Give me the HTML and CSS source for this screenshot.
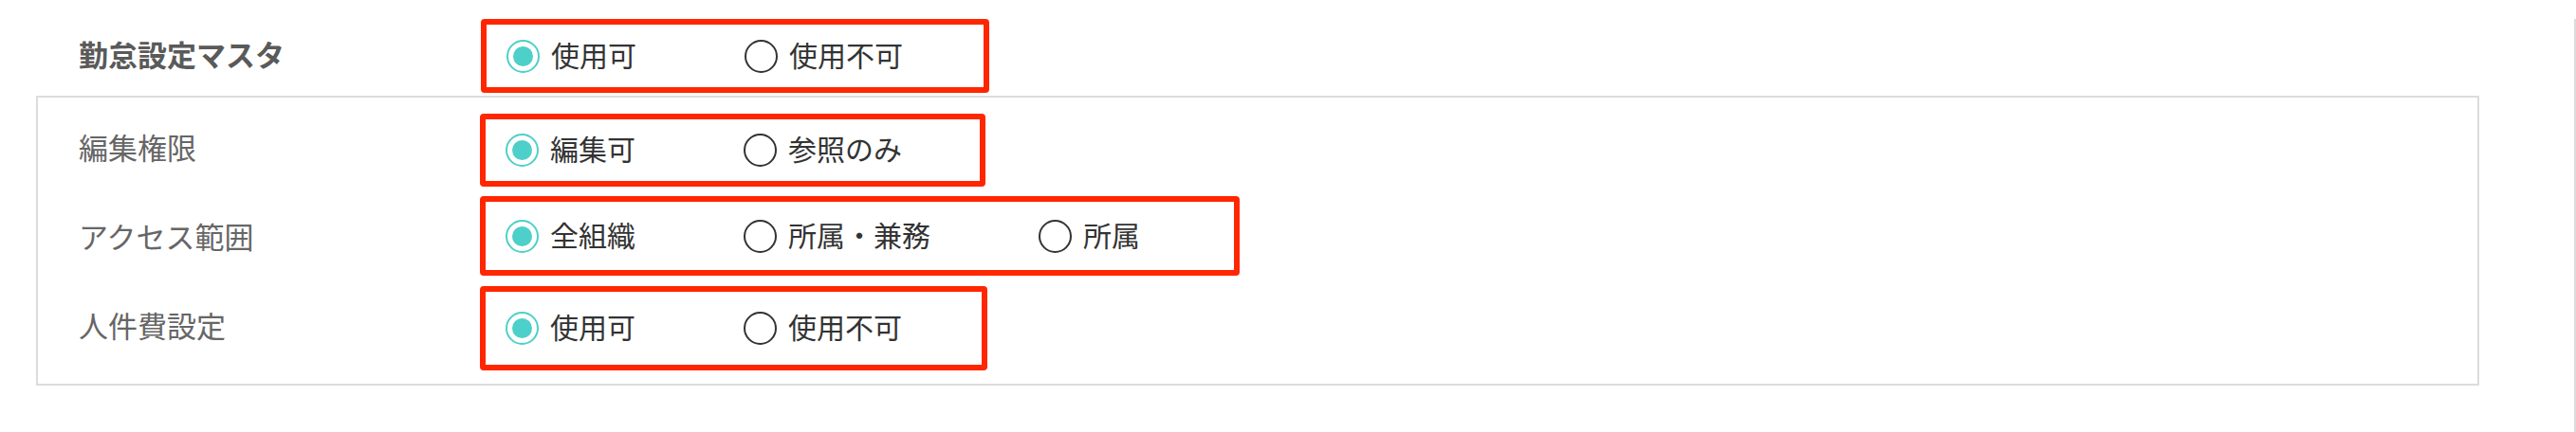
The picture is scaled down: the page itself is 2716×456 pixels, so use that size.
FILE: index.html
```html
<!DOCTYPE html>
<html lang="ja">
<head>
<meta charset="utf-8">
<title>勤怠設定マスタ</title>
<link rel="stylesheet" href="styles.css">
</head>
<body>
<div class="page">
  <div class="title-row">
    <div class="title">勤怠設定マスタ</div>
    <div class="opts opts-r1">
      <label class="opt"><span class="radio checked"></span><span class="opt-text">使用可</span></label>
      <label class="opt"><span class="radio"></span><span class="opt-text">使用不可</span></label>
    </div>
  </div>
  <div class="panel">
    <div class="row">
      <div class="label">編集権限</div>
      <div class="opts opts-r2">
        <label class="opt"><span class="radio checked"></span><span class="opt-text">編集可</span></label>
        <label class="opt"><span class="radio"></span><span class="opt-text">参照のみ</span></label>
      </div>
    </div>
    <div class="row">
      <div class="label">アクセス範囲</div>
      <div class="opts opts-r3">
        <label class="opt"><span class="radio checked"></span><span class="opt-text">全組織</span></label>
        <label class="opt"><span class="radio"></span><span class="opt-text">所属・兼務</span></label>
        <label class="opt"><span class="radio"></span><span class="opt-text">所属</span></label>
      </div>
    </div>
    <div class="row">
      <div class="label">人件費設定</div>
      <div class="opts opts-r4">
        <label class="opt"><span class="radio checked"></span><span class="opt-text">使用可</span></label>
        <label class="opt"><span class="radio"></span><span class="opt-text">使用不可</span></label>
      </div>
    </div>
  </div>
</div>
</body>
</html>
```
FILE: styles.css
```css
* { box-sizing: border-box; }
html, body {
  margin: 0;
  padding: 0;
  background: #fff;
}
body {
  width: 2716px;
  height: 456px;
  overflow: hidden;
  font-family: "Noto Sans CJK JP", "Noto Sans", sans-serif;
  font-size: 30px;
  line-height: 1;
}
.page {
  width: 2716px;
  height: 456px;
  padding: 0 100px 0 38px;
  border-right: 2px solid #dcdcdc;
}
.title-row {
  display: flex;
  align-items: center;
  height: 78px;
  margin-top: 20px;
  margin-bottom: 3px;
  padding-left: 45px;
}
.title {
  width: 424px;
  flex: none;
  font-size: 31px;
  font-weight: bold;
  color: #5a5a5a;
  padding-bottom: 6px;
}
.panel {
  border: 2px solid #dcdcdc;
  padding: 8px 0 12px 43px;
}
.row {
  display: flex;
  align-items: center;
  height: 94px;
}
.label {
  width: 423px;
  flex: none;
  font-size: 31px;
  color: #666;
  padding-bottom: 8px;
}
.opts {
  display: flex;
  align-items: center;
  flex: none;
  border: 6px solid #ff2600;
  border-radius: 4px;
  padding-left: 21px;
}
.opts-r1 { width: 536px; height: 78px; }
.opts-r2 { width: 533px; height: 77px; }
.opts-r3 { width: 801px; height: 84px; margin-top: -6px; }
.opts-r4 { width: 535px; height: 89px; }
.opt {
  display: flex;
  align-items: center;
  margin-right: 114px;
  color: #333;
}
.radio {
  width: 35px;
  height: 35px;
  border-radius: 50%;
  border: 2px solid #333;
  background: #fff;
  margin-right: 12px;
  display: flex;
  align-items: center;
  justify-content: center;
  flex: none;
}
.radio.checked {
  border-color: #4dd0c9;
}
.radio.checked::after {
  content: "";
  width: 21px;
  height: 21px;
  border-radius: 50%;
  background: #4dd0c9;
}
.opt-text {
  white-space: nowrap;
  padding-bottom: 5px;
}
```
